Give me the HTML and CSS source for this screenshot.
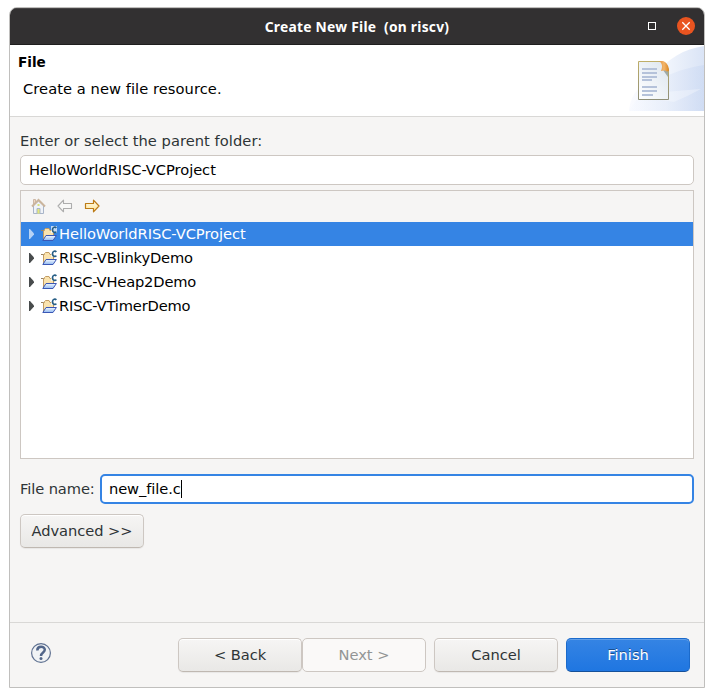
FILE: index.html
```html
<!DOCTYPE html>
<html lang="en">
<head>
<meta charset="utf-8">
<title>Create New File</title>
<link rel="stylesheet" href="styles.css">
</head>
<body>
<svg class="defs" width="0" height="0">
  <defs>
    <linearGradient id="fold" x1="0" y1="0" x2="0" y2="1"><stop offset="0" stop-color="#f4f9ff"/><stop offset="1" stop-color="#8fb8f0"/></linearGradient>
    <linearGradient id="gold" x1="0" y1="0" x2="0" y2="1"><stop offset="0" stop-color="#fffdf0"/><stop offset="1" stop-color="#ffe391"/></linearGradient>
    <symbol id="project" viewBox="0 0 16 16">
      <path d="M2.500 13V4.500H3.500V3.500L4.500 2.500H8L9 4.500H12.500V9.500" fill="#fae3ae" stroke="#c39c62"/>
      <path d="M0 4.500H2.500" stroke="#9a8260"/>
      <path d="M5 9.500H15.400L12 14.500H1.800Z" fill="url(#fold)" stroke="#3a57b5"/>
      <path class="halo" d="M10 0h6v7h-6z" fill="#fff"/>
      <path d="M15.300 2C14.400 .6 11.500 .8 11.500 3.800S14.400 7 15.300 5.600" fill="none" stroke="#285f86" stroke-width="1.700"/>
    </symbol>
  </defs>
</svg>
<main class="window">
  <header class="titlebar">
    <span class="title">Create New File&nbsp; (on riscv)</span>
    <span class="maximize"></span>
    <span class="close"><svg width="18" height="18" viewBox="0 0 18 18"><path d="M5.300 5.300l7.400 7.400M12.700 5.300l-7.400 7.400" stroke="#fff" stroke-width="1.300"/></svg></span>
  </header>
  <section class="banner">
    <div class="banner-text">
      <h1>File</h1>
      <p>Create a new file resource.</p>
    </div>
    <svg class="banner-art" width="75" height="66" viewBox="0 0 75 66">
      <defs>
        <linearGradient id="sweep" x1="0" x2="1"><stop offset="0" stop-color="#fafbff"/><stop offset=".5" stop-color="#f1f5fc"/><stop offset="1" stop-color="#dae4f6"/></linearGradient>
        <linearGradient id="sweep2" x1="0" x2="1"><stop offset="0" stop-color="#f6f9ff" stop-opacity=".8"/><stop offset="1" stop-color="#c6d5f1"/></linearGradient>
        <linearGradient id="page" x1="0" y1="1" x2="1" y2="0"><stop offset="0" stop-color="#fff"/><stop offset="1" stop-color="#dce5ef"/></linearGradient>
        <linearGradient id="curl"><stop offset="0" stop-color="#e09440"/><stop offset=".5" stop-color="#f3b56c"/><stop offset="1" stop-color="#d98521"/></linearGradient>
        <linearGradient id="edge" x1="0" y1="0" x2="0" y2="1"><stop offset="0" stop-color="#bfae68"/><stop offset="1" stop-color="#8f8f78"/></linearGradient>
      </defs>
      <path d="M0 66C2 48 10 42 25 31C39 13 55 4 75 1V66Z" fill="url(#sweep)"/>
      <path d="M0 66C16 38 43 25 75 20V66Z" fill="url(#sweep2)" opacity=".5"/>
      <path d="M37 47Q58 45 72 44Q59 51 45 57L20 53Z" fill="#fff" opacity=".3"/>
      <path d="M9.500 16.500H32L39.500 24V54.500H9.500Z" fill="url(#page)" stroke="url(#edge)"/>
      <path d="M34 25L39 25V32Z" fill="#718078" opacity=".6"/>
      <path d="M30 16H34C37 17 40 20 40 26H38.500V27.500C37 25 34.500 25.500 32 26C34 21 33 18 30 16Z" fill="url(#curl)"/>
      <path d="M13 24h15M13 28h15M13 32h15M13 35h10M13 42h15M13 46h15M13 50h11" stroke="#b5c2da" stroke-width="2"/>
    </svg>
  </section>
  <section class="content">
    <label class="parent-label">Enter or select the parent folder:</label>
    <div class="field parent-field">HelloWorldRISC-VCProject</div>
    <div class="tree">
      <div class="toolbar">
        <svg width="16" height="16" viewBox="0 0 16 16">
          <path d="M3.500 7.500V15.500H13.500V7.500L8.500 3Z" fill="#f0f3f8" stroke="#a9b5c8"/>
          <path d="M3.500 6V1.500H5.500V4" fill="#efd9c5" stroke="#cdb7a5"/>
          <path d="M2 8.500L8.500 2L15 8.500" fill="none" stroke="#cbb59d" stroke-width="2"/>
          <path d="M7 15.500V10.500H10V15.500" fill="#e5e978" stroke="#a9b5c8"/>
          <path d="M7.500 6h2v2h-2z" fill="#d8e27a"/>
        </svg>
        <svg width="16" height="16" viewBox="0 0 16 16"><path d="M1 8L6.500 2.200V5.500H14.500V10.500H6.500V13.800Z" fill="#f8f8f7" stroke="#adadad" stroke-width="1.100" stroke-linejoin="round"/></svg>
        <svg width="16" height="16" viewBox="0 0 16 16"><path d="M15 8L9.500 2.200V5.500H1.500V10.500H9.500V13.800Z" fill="url(#gold)" stroke="#bd7c17" stroke-width="1.200" stroke-linejoin="round"/></svg>
      </div>
      <div class="row selected"><i class="arrow"></i><svg width="16" height="16"><use href="#project"/></svg><span>HelloWorldRISC-VCProject</span></div>
      <div class="row blinky"><i class="arrow"></i><svg width="16" height="16"><use href="#project"/></svg><span>RISC-VBlinkyDemo</span></div>
      <div class="row"><i class="arrow"></i><svg width="16" height="16"><use href="#project"/></svg><span>RISC-VHeap2Demo</span></div>
      <div class="row"><i class="arrow"></i><svg width="16" height="16"><use href="#project"/></svg><span>RISC-VTimerDemo</span></div>
    </div>
    <div class="name-row">
      <label>File name:</label>
      <div class="field focused">new_file.c<i class="caret"></i></div>
    </div>
    <button class="button">Advanced &gt;&gt;</button>
  </section>
  <footer class="footer">
    <svg class="help" width="22" height="22" viewBox="0 0 22 22">
      <circle cx="11" cy="11" r="9.400" fill="#f1f3f5" stroke="#5f7191" stroke-width="1.200"/>
      <path d="M7.300 8.400C7.300 3.500 14.800 3.700 14.800 7.800C14.800 10.600 11 10.300 11 14" fill="none" stroke="#52668a" stroke-width="2.500"/>
      <circle cx="11" cy="16.600" r="1.500" fill="#52668a"/>
    </svg>
    <button class="button">&lt; Back</button>
    <button class="button disabled">Next &gt;</button>
    <button class="button cancel">Cancel</button>
    <button class="button primary">Finish</button>
  </footer>
</main>
</body>
</html>
```
FILE: styles.css
```css
* { box-sizing: border-box; }
body {
  margin: 0;
  padding: 7px 9px 9px;
  background: #fff;
  color: #2e3436;
  font: 14.667px/20px "DejaVu Sans", sans-serif;
}
svg { display: block; flex: none; }
.defs { position: absolute; }
.window {
  display: flex;
  flex-direction: column;
  width: 696px;
  height: 681px;
  border: 1px solid #c0bfbd;
  border-radius: 8px 8px 0 0;
  background: #f6f5f4;
  overflow: hidden;
}
.titlebar {
  display: grid;
  grid-template-columns: 1fr auto 1fr;
  align-items: center;
  flex: none;
  height: 37px;
  background: #323031;
  border-top: 1px solid #474546;
  border-bottom: 1px solid #1f1e1e;
  position: relative;
}
.title {
  grid-column: 2;
  color: #fff;
  font: bold 13.800px/20px "Noto Sans", sans-serif;
  letter-spacing: .260px;
  white-space: nowrap;
}
.maximize {
  grid-column: 3;
  justify-self: end;
  width: 8px;
  height: 8px;
  margin-right: 48px;
  margin-bottom: 1px;
  border: 1px solid #fff;
}
.close {
  position: absolute;
  right: 9px;
  top: 8px;
  width: 18px;
  height: 18px;
  border-radius: 50%;
  background: #e95420;
}
.banner {
  display: flex;
  justify-content: space-between;
  flex: none;
  height: 72px;
  background: #fff;
  border-bottom: 1px solid #d9d8d6;
  color: #000;
}
.banner-text { padding: 7px 0 0 8px; }
.banner h1 { margin: 0; font-size: 13.600px; line-height: 20px; }
.banner p { margin: 7px 0 0 5px; letter-spacing: .060px; }
.content {
  display: flex;
  flex-direction: column;
  align-items: flex-start;
  flex: 1;
  padding: 14px 10px 0;
}
.parent-label { margin-bottom: 4px; letter-spacing: .050px; }
.field {
  display: flex;
  align-items: center;
  width: 674px;
  height: 30px;
  padding: 0 8px;
  border: 1px solid #cdc7c2;
  border-radius: 5px;
  background: #fff;
  color: #000;
  letter-spacing: -.050px;
}
.tree {
  width: 674px;
  height: 269px;
  margin-top: 5px;
  border: 1px solid #cdc7c2;
  background: #fff;
}
.toolbar {
  display: flex;
  align-items: center;
  gap: 11px;
  height: 31px;
  padding: 0 0 1px 9px;
  background: #f6f5f4;
}
.row {
  display: flex;
  align-items: center;
  height: 24px;
  padding-left: 8px;
  color: #000;
  letter-spacing: -.170px;
}
.row.blinky { letter-spacing: -.140px; }
.row svg { margin: 0 2px 0 7px; }
.row.selected { background: #3584e4; color: #fff; letter-spacing: -.060px; }
.halo { opacity: .7; }
.selected .arrow { background: #b6d3f6; }
.arrow {
  width: 5px;
  height: 10px;
  background: #484b4c;
  clip-path: polygon(0 0, 20% 0, 100% 45%, 100% 55%, 20% 100%, 0 100%);
}
.name-row {
  display: flex;
  align-items: center;
  width: 674px;
  margin: 15px 0 10px;
}
.name-row label { width: 80px; flex: none; letter-spacing: -.100px; }
.focused { width: auto; flex: 1; border: 2px solid #3584e4; padding-left: 7px; letter-spacing: -.100px; }
.caret { width: 1px; height: 18px; background: #000; }
.button {
  width: 124px;
  height: 34px;
  padding: 0;
  border: 1px solid #cdc7c2;
  border-bottom-color: #bfb8b1;
  border-radius: 5px;
  background: linear-gradient(#f6f5f4, #e9e8e6);
  box-shadow: inset 0 1px #fff, 0 1px 1px rgba(0, 0, 0, .06);
  color: #2e3436;
  font: inherit;
  letter-spacing: -.050px;
}
.disabled {
  background: #faf9f8;
  border-color: #cdc7c2;
  box-shadow: none;
  color: #929595;
}
.footer {
  display: flex;
  align-items: center;
  flex: none;
  height: 65px;
  padding: 0 14px 1px 20px;
  border-top: 1px solid #d9d8d6;
}
.help { margin: -4px auto 0 0; }
.cancel { margin: 0 8px; }
.primary {
  border-color: #1b6acb;
  border-bottom-color: #155099;
  background: linear-gradient(#3584e4, #1f76e1);
  box-shadow: inset 0 1px #629fe8;
  color: #fff;
  text-shadow: 0 -1px rgba(0, 0, 0, .4);
}
```
